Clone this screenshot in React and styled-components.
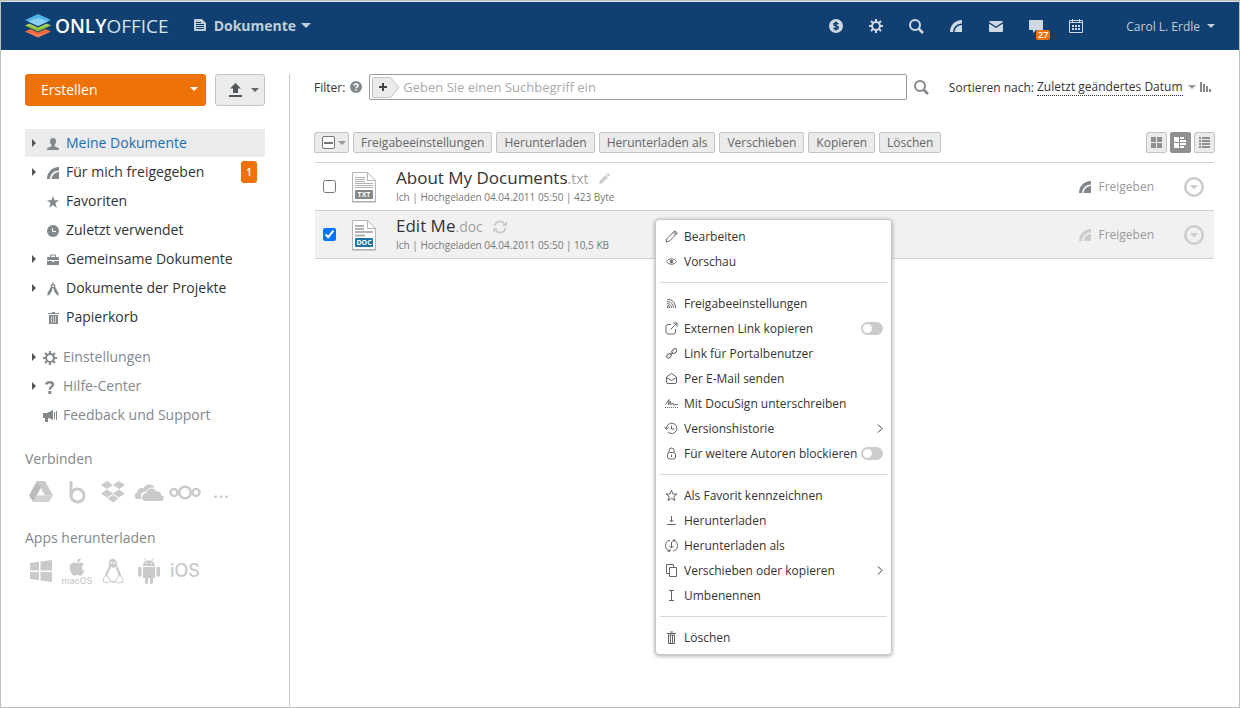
import React, { useState } from 'react';
import styled, { createGlobalStyle, css } from 'styled-components';
import { FaApple } from 'react-icons/fa';

const GlobalStyle = createGlobalStyle`
  * {
    box-sizing: border-box;
  }
  body {
    margin: 0;
    background: #fff;
    color: #333;
    font-family: 'Open Sans', 'Liberation Sans', sans-serif;
    font-size: 12px;
  }
  button, input, select {
    font-family: inherit;
    font-size: inherit;
    color: inherit;
  }
  svg {
    display: block;
    flex: none;
  }
`;

/* ---------- icons ---------- */

const Icon = ({ w = 14, h = 14, children, ...rest }) => (
  <svg width={w} height={h} viewBox={`0 0 ${w} ${h}`} fill="currentColor" aria-hidden="true" {...rest}>
    {children}
  </svg>
);

const Line = ({ children, ...rest }) => (
  <Icon w={13} h={13} fill="none" stroke="currentColor" strokeWidth="1" {...rest}>
    {children}
  </Icon>
);

const LogoIcon = () => (
  <Icon w={26} h={24}>
    <path d="M0 17.5L13 11.5L26 17.5L13 23.5Z" fill="#f0693e" />
    <path d="M0 17.5L13 23L26 17.5L13 20.5Z" fill="#f7987a" opacity="0.5" />
    <path d="M0 12.5L13 6.5L26 12.5L13 18.5Z" fill="#0f4071" />
    <path d="M0 11.5L13 5.5L26 11.5L13 17.5Z" fill="#8ec03c" />
    <path d="M0 11.5L13 6L26 11.5L13 14.5Z" fill="#b5d66c" opacity="0.6" />
    <path d="M0 7.5L13 2L26 7.5L13 13.5Z" fill="#0f4071" />
    <path d="M0 6L13 0L26 6L13 12Z" fill="#4fb3e8" />
    <path d="M3 7.4L13 4L23 7.4L13 12Z" fill="#a5dcf6" opacity="0.7" />
  </Icon>
);

const DocIcon = () => (
  <Icon w={12} h={12}>
    <path d="M1 0H8L12 4V11A1 1 0 0 1 11 12H1A1 1 0 0 1 0 11V1A1 1 0 0 1 1 0Z" />
    <path d="M2 3.5H7M2 5.5H10M2 7.5H10M2 9.5H10" stroke="#0f4071" />
  </Icon>
);

const DollarIcon = () => (
  <Icon>
    <circle cx="7" cy="7" r="7" />
    <path
      d="M9.3 5.1C8.9 4.3 8 4 7 4C5.7 4 4.8 4.6 4.8 5.5C4.8 7.5 9.3 6.4 9.3 8.5C9.3 9.5 8.3 10.1 7 10.1C5.9 10.1 5 9.7 4.6 8.9M7 2.5V11.5"
      fill="none"
      stroke="#0f4071"
      strokeWidth="1.5"
    />
  </Icon>
);

const GearIcon = () => (
  <Icon>
    <circle cx="7" cy="7" r="3.9" fill="none" stroke="currentColor" strokeWidth="2" />
    <path
      d="M7 0V3M7 11V14M0 7H3M11 7H14M2 2L4.2 4.2M9.8 9.8L12 12M2 12L4.2 9.8M9.8 4.2L12 2"
      stroke="currentColor"
      strokeWidth="2"
    />
  </Icon>
);

const SearchIcon = () => (
  <Icon w={15} h={15} fill="none" stroke="currentColor" strokeWidth="2">
    <circle cx="6" cy="6" r="5" />
    <path d="M9.5 9.5L14 14" strokeWidth="2.5" />
  </Icon>
);

const FeedIcon = () => (
  <Icon w={12} h={12}>
    <path d="M0 12C0 5 5 0 12 0V3.5C7 3.5 3.5 7 3 12Z" />
    <path d="M4.5 12C5 8 8 5 12 5V12Z" />
  </Icon>
);

const MailIcon = () => (
  <Icon w={14} h={11}>
    <path d="M0 1A1 1 0 0 1 1 0H13A1 1 0 0 1 14 1L7 5.5Z" />
    <path d="M0 2.5L7 7L14 2.5V10A1 1 0 0 1 13 11H1A1 1 0 0 1 0 10Z" />
  </Icon>
);

const ChatIcon = () => (
  <Icon w={14} h={13}>
    <path d="M1 0H13A1 1 0 0 1 14 1V10H7L4 13V10H1A1 1 0 0 1 0 9V1A1 1 0 0 1 1 0Z" />
  </Icon>
);

const CalendarIcon = () => (
  <Icon>
    <path d="M0.5 1.5H13.5V13.5H0.5Z" fill="none" stroke="currentColor" />
    <path d="M3 0H4V3H3ZM10 0H11V3H10ZM1 3H13V4H1Z" />
    <path d="M3 6h2v2h-2zM6 6h2v2h-2zM9 6h2v2h-2zM3 9h2v2h-2zM6 9h2v2h-2zM9 9h2v2h-2z" />
  </Icon>
);

const UploadIcon = () => (
  <Icon w={13} h={14}>
    <path d="M6.5 0L12 5.5H9V10H4V5.5H1ZM0 12H13V14H0Z" />
  </Icon>
);

const UserIcon = () => (
  <Icon w={12} h={12}>
    <path d="M6 0C8 0 9 1.400 9 3.200C9 5 8.200 6.300 7.500 7V8.300L11 9.700C11.700 10 12 10.500 12 12H0C0 10.500 0.300 10 1 9.700L4.500 8.300V7C3.800 6.300 3 5 3 3.200C3 1.400 4 0 6 0Z" />
  </Icon>
);

const StarIcon = () => (
  <Icon w={12} h={12}>
    <path d="M6 0L7.500 4.300H12L8.400 7L9.800 12L6 8.900L2.200 12L3.600 7L0 4.300H4.500Z" />
  </Icon>
);

const ClockIcon = () => (
  <Icon w={12} h={12}>
    <circle cx="6" cy="6" r="6" />
    <path d="M5.500 3V6.500H9" fill="none" stroke="#fff" />
  </Icon>
);

const CaseIcon = () => (
  <Icon w={12} h={12}>
    <path d="M3.500 3V1H8.500V3" fill="none" stroke="currentColor" />
    <path d="M1 3H11A1 1 0 0 1 12 4V6H0V4A1 1 0 0 1 1 3ZM0 7H5V8H7V7H12V11H0Z" />
  </Icon>
);

const CompassIcon = () => (
  <Icon w={12} h={14}>
    <path d="M5.500 0H6.500V2A2.200 2.200 0 0 1 8.200 5L11.500 11V14L8.800 12L6.700 7.500V6.200H5.300V7.500L3.200 12L0.500 14V11L3.800 5A2.200 2.200 0 0 1 5.500 2Z" />
    <circle cx="6" cy="4.200" r="0.900" fill="#fff" />
    <path d="M2 10L5 9M7 9L10 10" stroke="currentColor" />
  </Icon>
);

const TrashIcon = () => (
  <Icon w={11} h={12}>
    <path d="M4 0H7V1H11V2H0V1H4ZM1 3H10V12H1Z" />
    <path d="M3.500 4V11M5.500 4V11M7.500 4V11" stroke="#fff" strokeOpacity="0.6" />
  </Icon>
);

const HelpIcon = () => (
  <Icon w={10} h={13}>
    <path
      d="M1 3.500C1.500 1.800 3 1.200 4.800 1.200C7 1.200 8 2.200 8 3.600C8 5.800 4.800 5.800 4.800 8.800"
      fill="none"
      stroke="currentColor"
      strokeWidth="2.400"
    />
    <path d="M3.300 10H6.300V13H3.300Z" />
  </Icon>
);

const HornIcon = () => (
  <Icon w={14} h={12}>
    <path d="M0 3H4L10 0V10L6 8H5V12H2V8H0Z" />
    <path d="M11.500 2V9M13.500 1V10" stroke="currentColor" />
  </Icon>
);

const QuestionIcon = () => (
  <Icon w={12} h={12}>
    <circle cx="6" cy="6" r="6" />
    <path d="M4 4.600C4.100 3.500 5 3 6 3C7.200 3 8 3.600 8 4.600C8 5.800 6.200 5.800 6.200 7.300M6.200 8.300V9.800" fill="none" stroke="#fff" strokeWidth="1.500" />
  </Icon>
);

const SortIcon = () => (
  <Icon w={12} h={10}>
    <path d="M0 0H2V10H0ZM3 2H5V10H3ZM6 4H8V10H6ZM9 7H11V10H9Z" />
  </Icon>
);

const TilesIcon = () => (
  <Icon w={11} h={11}>
    <path d="M0 0H5V5H0ZM6 0H11V5H6ZM0 6H5V11H0ZM6 6H11V11H6Z" />
  </Icon>
);

const DetailsIcon = () => (
  <Icon w={13} h={11}>
    <path d="M0 0H5V5H0ZM0 6H5V11H0ZM6 0H10V2H6ZM6 3H12V5H6ZM6 6H12V8H6ZM6 9H10V11H6Z" />
  </Icon>
);

const ListIcon = () => (
  <Icon w={11} h={11}>
    <path d="M0 0H2V2H0ZM3 0H11V2H3ZM0 3H2V5H0ZM3 3H11V5H3ZM0 6H2V8H0ZM3 6H11V8H3ZM0 9H2V11H0ZM3 9H11V11H3Z" />
  </Icon>
);

const FileIcon = ({ label, color, full }) => (
  <Icon w={25} h={31}>
    <path d="M0.500 0.500H15.500L23.500 8.500V29.500H0.500Z" fill="#fff" stroke="#b5b5b5" />
    <path d="M15.500 0.500V8.500H23.500" fill="none" stroke="#b5b5b5" />
    <path d="M0 30H24" stroke="#aaa" />
    <path
      d={full ? 'M3 5.500H13M3 7.500H13M3 9.500H13M3 11.500H21M3 13.500H21M3 15.500H21' : 'M3 6H12M3 9H12M3 12H21M3 15.500H13'}
      stroke="#b0b0b0"
      strokeWidth={full ? 1 : 2}
    />
    <rect x="3" y="18" width="18" height="9" rx="1" fill={color} />
    <text x="12" y="25" fontSize="7" fontWeight="700" fill="#fff" textAnchor="middle">
      {label}
    </text>
  </Icon>
);

const PenIcon = () => (
  <Icon w={11} h={11}>
    <path d="M0 11L0.800 7.800L6.500 2L9 4.500L3.200 10.200ZM7.200 1.300L8.200 0.400Q8.800 0 9.400 0.400L10.600 1.600Q11 2.200 10.600 2.800L9.700 3.800Z" />
  </Icon>
);

const RefreshIcon = () => (
  <Icon>
    <path d="M1.500 6C2 3.300 4.300 1.500 7 1.500C9 1.500 10.500 2.400 11.500 4M12.500 8C12 10.700 9.700 12.500 7 12.500C5 12.500 3.500 11.600 2.500 10" fill="none" stroke="currentColor" strokeWidth="1.800" />
    <path d="M14 1V6H9ZM0 13V8H5Z" />
  </Icon>
);

const ActionsIcon = () => (
  <Icon w={20} h={20}>
    <circle cx="10" cy="10" r="8.700" fill="none" stroke="currentColor" strokeWidth="2.500" />
    <path d="M6 8H14L10 12.500Z" />
  </Icon>
);

/* storage services */

const DriveIcon = () => (
  <Icon w={24} h={22}>
    <path d="M8 0H16L12 6.500L4 21L0 14.500Z" fill="#b9bbbc" />
    <path d="M8 0H16L24 14.500H16Z" />
    <path d="M7.500 14.500H24L20 21H4Z" fill="#cfd1d2" />
  </Icon>
);

const BoxIcon = () => (
  <Icon w={17} h={23} fill="none" stroke="currentColor" strokeWidth="3">
    <circle cx="8.500" cy="14.500" r="6.500" />
    <path d="M2 14.500V1.500" strokeLinecap="round" />
  </Icon>
);

const DropboxIcon = () => (
  <Icon w={24} h={22}>
    <path d="M6 0L12 4L6 8L0 4ZM18 0L24 4L18 8L12 4ZM6 8.500L12 12.500L6 16.500L0 12.500ZM18 8.500L24 12.500L18 16.500L12 12.500ZM12 13.700L17.500 17.500L12 21.500L6.500 17.500Z" />
  </Icon>
);

const CloudIcon = () => (
  <Icon w={30} h={17}>
    <path d="M3 15C0 14 -0.500 9.500 3.500 8.500C3 5 7 3 9.500 4.500C11.500 -0.500 19 -1 21 4C17 2.800 13.500 4.500 12.500 7.500C8 7 5.500 11 7.500 15Z" />
    <path d="M11 17C6.500 17 6.500 9.500 12.500 9C13 4 20 2.500 22.500 7.500C26 7 27.500 9 27 11C31 11.500 30.500 17 27 17Z" />
  </Icon>
);

const NextcloudIcon = () => (
  <Icon w={32} h={15} fill="none" stroke="currentColor" strokeWidth="2.500">
    <circle cx="16" cy="7.500" r="5.800" />
    <circle cx="5" cy="7.500" r="3.500" />
    <circle cx="27" cy="7.500" r="3.500" />
  </Icon>
);

/* platforms */

const WindowsIcon = () => (
  <Icon w={22} h={22}>
    <path d="M0 3L9 1.800V10.500H0ZM10.500 1.600L22 0V10.500H10.500ZM0 12H9V20.200L0 19ZM10.500 12H22V22L10.500 20.400Z" />
  </Icon>
);

const TuxIcon = () => (
  <Icon w={22} h={26}>
    <path d="M7 7C6 -1 15 -1 15 6C15 12 20 13 19 21L11 25L3 21C2 14 7 12 7 7Z" />
    <path d="M9 8.500L11 10L13.500 8.500C14 12 16.500 14 16.500 18C16.500 21 14 23 11 23C8 23 5.500 21 5.500 18C5.500 14 8.500 12 9 8.500Z" fill="#fff" />
    <circle cx="9.500" cy="5" r="1" fill="#fff" />
    <circle cx="12.500" cy="5" r="1" fill="#fff" />
    <path d="M4 17L9 23Q7 26 1 24Q0 21 4 17ZM18 17L13 23Q15 26 21 24Q22 21 18 17Z" fill="#fff" stroke="currentColor" />
  </Icon>
);

const AndroidIcon = () => (
  <Icon w={22} h={26}>
    <path d="M5 8C5 0.500 17 0.500 17 8ZM5 9H17V20H15V24.500A1.500 1.500 0 0 1 12 24.500V20H10V24.500A1.500 1.500 0 0 1 7 24.500V20H5ZM0 10.500A1.800 1.800 0 0 1 3.600 10.500V17A1.800 1.800 0 0 1 0 17ZM18.400 10.500A1.800 1.800 0 0 1 22 10.500V17A1.800 1.800 0 0 1 18.400 17Z" />
    <path d="M6.500 0.500L8.500 3.500M15.500 0.500L13.500 3.500" stroke="currentColor" />
    <circle cx="8.500" cy="5.500" r="0.800" fill="#fff" />
    <circle cx="13.500" cy="5.500" r="0.800" fill="#fff" />
  </Icon>
);

/* context menu */

const menuIcons = {
  edit: (
    <Line>
      <path d="M1 12L2 8.500L9 1.500L11.500 4L4.500 11ZM9 1.500L10 0.800L12.200 3L11.500 4M8 2.500L10.500 5" />
    </Line>
  ),
  eye: (
    <Line>
      <path d="M1.500 6.500C4 2.800 9 2.800 11.500 6.500C9 10.200 4 10.200 1.500 6.500Z" />
      <circle cx="6.500" cy="6.500" r="1.300" fill="currentColor" />
    </Line>
  ),
  share: (
    <Line>
      <path d="M2 2.500C7 2 10.500 5.500 10.500 11M2 4.500C6 4.500 8.500 7 8.500 11M2 6.500C5 6.500 6.500 8.500 6.500 11M2 8.500C4 8.500 4.500 9.500 4.500 11" />
      <path d="M2 9.500H3.500V11H2Z" fill="currentColor" stroke="none" />
    </Line>
  ),
  external: (
    <Line>
      <path d="M6 2.500H3Q1 2.500 1 4.500V10Q1 12 3 12H8.500Q10.500 12 10.500 10V7M5.500 7.500L12 1M8 1H12V5" />
    </Line>
  ),
  link: (
    <Line>
      <rect x="6.500" y="2.300" width="5.500" height="3.600" rx="1.800" transform="rotate(-40 9.200 4.100)" />
      <rect x="1.500" y="7" width="5" height="3.600" rx="1.800" transform="rotate(-40 4 8.800)" />
      <path d="M4.500 8.300L8.500 4.700" />
    </Line>
  ),
  mail: (
    <Line>
      <path d="M1.500 5L6.500 1.500L11.500 5V10Q11.500 11.500 10 11.500H3Q1.500 11.500 1.500 10ZM1.500 5.500L6.500 8.500L11.500 5.500" />
    </Line>
  ),
  sign: (
    <Line>
      <path d="M0.500 7.500L4 2.500L3.500 8L5.500 4L6 8L8 6L8.500 8L13 7.500" />
      <path d="M0 10.500H13" strokeDasharray="1 1" />
    </Line>
  ),
  history: (
    <Line>
      <path d="M1.500 6.500A5.200 5.200 0 1 1 3 10M-0.500 5L1.500 7.500L3.800 5M6.500 3.500V7H9.500" />
    </Line>
  ),
  lock: (
    <Line>
      <rect x="2.500" y="5.500" width="8" height="6.500" rx="2" />
      <path d="M4 5.500V3.500Q4 1 6.500 1Q9 1 9 3.500V5.500M6.500 7.500V10" />
    </Line>
  ),
  star: (
    <Line>
      <path d="M6.500 1.200L7.900 5H12L8.800 7.400L10 11.600L6.500 9.200L3 11.600L4.200 7.400L1 5H5.100Z" />
    </Line>
  ),
  download: (
    <Line>
      <path d="M6.500 2V8M4.500 6L6.500 8L8.500 6M2 10.500H11" />
    </Line>
  ),
  downloadAs: (
    <Line>
      <path d="M5 12A5.500 5.500 0 0 1 5 1.200M8 1.200A5.500 5.500 0 0 1 8 12M6.500 3V9M4.500 7L6.500 9L8.500 7M2.500 12.200H5V10M10.500 1H8V3.300" />
    </Line>
  ),
  copy: (
    <Line>
      <path d="M4.500 3.500H11.500V12.500H4.500ZM4 9.500H1.500V0.500H8.500V3" />
    </Line>
  ),
  rename: (
    <Line>
      <path d="M6.500 1.500V11.500M4 1.500H9M4 11.500H9" />
    </Line>
  ),
  trash: (
    <Line>
      <path d="M2 2.500H11M5 1H8M3.500 4V12.500H9.500V4M5.500 4V12M7.500 4V12M3 4H10" />
    </Line>
  ),
};

/* ---------- layout ---------- */

const Page = styled.div`
  display: flex;
  flex-direction: column;
  min-height: 100vh;
  border: 1px solid #bfbfbf;
`;

const Header = styled.header`
  display: flex;
  align-items: center;
  height: 49px;
  padding: 0 24px;
  border-top: 1px solid #dfe3e8;
  background: #0f4071;
  color: #cfd9e3;
`;

const Logo = styled.a`
  display: flex;
  align-items: center;
  gap: 4px;
  color: #fff;
  font-size: 19px;
  font-weight: 600;
  text-decoration: none;

  em {
    color: #d5e1ea;
    font-style: normal;
    font-weight: 500;
  }
`;

const HeaderButton = styled.button`
  display: flex;
  align-items: center;
  padding: 0;
  border: none;
  background: none;
  cursor: pointer;
`;

const ProductButton = styled(HeaderButton)`
  gap: 5px;
  margin-left: 25px;
  padding-bottom: 2px;
  font-size: 14px;
  font-weight: 700;
  color: #c3cdd8;

  svg {
    margin-right: 3px;
  }
`;

const HeaderIcons = styled.nav`
  display: flex;
  margin-left: auto;
`;

const HeaderLink = styled.a`
  position: relative;
  display: flex;
  align-items: center;
  justify-content: center;
  width: 40px;
  height: 32px;
  color: inherit;
`;

const HeaderBadge = styled.span`
  position: absolute;
  right: 6px;
  bottom: 2px;
  height: 10px;
  padding: 0 2px;
  border-radius: 2px;
  background: #ed7309;
  color: #fff;
  font-size: 9px;
  font-weight: 600;
  line-height: 10px;
`;

const UserButton = styled(HeaderButton)`
  gap: 7px;
  margin-left: 30px;
  color: #c3cdd8;
`;

const Caret = styled.span`
  flex: none;
  border: ${(props) => props.$size || 4}px solid transparent;
  border-top-color: currentColor;
  border-bottom: none;
`;

const Body = styled.div`
  display: flex;
  flex: 1;
  padding: 24px 24px 0;
`;

const Sidebar = styled.aside`
  flex: none;
  width: 265px;
  padding-right: 24px;
  border-right: 1px solid #c9c9c9;
`;

const SidebarButtons = styled.div`
  display: flex;
  gap: 9px;
  margin-bottom: 23px;
`;

const CreateButton = styled.button`
  display: flex;
  flex: 1;
  align-items: center;
  justify-content: space-between;
  height: 32px;
  padding: 0 8px 2px 16px;
  border: none;
  border-radius: 3px;
  background: #ed7309;
  color: #fff;
  font-size: 14px;
  cursor: pointer;
`;

const UploadButton = styled.button`
  display: flex;
  align-items: center;
  gap: 9px;
  height: 32px;
  padding: 0 5px 0 13px;
  border: 1px solid #c4c4c4;
  border-radius: 3px;
  background: #ebebeb;
  color: #666;
  cursor: pointer;

  svg {
    color: #50565a;
  }
`;

const NavList = styled.ul`
  display: flex;
  flex-direction: column;
  gap: 1px;
  margin: 0 0 12px;
  padding: 0;
  list-style: none;
`;

const NavLink = styled.a`
  display: flex;
  align-items: center;
  height: 28px;
  padding: 0 8px 0 7px;
  color: ${(props) => (props.$active ? '#1a6db3' : props.$minor ? '#83888d' : '#333')};
  background: ${(props) => (props.$active ? '#ebebeb' : 'none')};
  font-size: 14px;
  text-decoration: none;

  svg {
    color: #83888d;
  }
`;

const NavArrow = styled.span`
  width: 4px;
  margin-right: ${(props) => (props.$minor ? 7 : 10)}px;
  border: 4px solid transparent;
  border-left-color: ${(props) => (props.$open ? '#555' : 'transparent')};
  border-right: none;
`;

const NavIcon = styled.span`
  display: flex;
  justify-content: center;
  width: 14px;
  margin-right: 6px;
  padding-top: 2px;
`;

const NavName = styled.span`
  padding-bottom: 2px;
`;

const NavBadge = styled.span`
  width: 16px;
  margin-left: auto;
  border-radius: 3px;
  background: #ed7309;
  color: #fff;
  font-size: 10px;
  font-weight: 600;
  line-height: 22px;
  text-align: center;
`;

const SidebarTitle = styled.h2`
  margin: 0;
  padding-top: ${(props) => props.$top}px;
  color: #83888d;
  font-size: 14px;
  font-weight: 400;
  line-height: 20px;
`;

const ServiceList = styled.div`
  display: flex;
  align-items: center;
  gap: 4px;
  height: 28px;
  margin-top: 9px;
`;

const ServiceLink = styled.a`
  display: flex;
  flex-direction: column;
  align-items: center;
  justify-content: center;
  width: 32px;
  height: 30px;
  color: #c8cacb;
  font-family: 'Inter', 'Liberation Sans', sans-serif;
  font-size: ${(props) => (props.$big ? 18 : 9)}px;
  font-weight: 500;
  line-height: ${(props) => (props.$big ? 28 : 8)}px;
  text-decoration: none;
`;

const Main = styled.main`
  flex: 1;
  min-width: 0;
  padding-left: 24px;
`;

const FilterBar = styled.div`
  display: flex;
  align-items: center;
  height: 26px;
`;

const FilterLabel = styled.label`
  margin-right: 5px;
`;

const PlainButton = styled.button`
  display: flex;
  align-items: center;
  padding: 0;
  border: none;
  background: none;
  color: #83888d;
  cursor: pointer;
`;

const SearchBox = styled.div`
  display: flex;
  flex: 1;
  align-items: center;
  height: 26px;
  margin: 0 7px;
  padding: 0 2px;
  border: 1px solid #999;
  border-radius: 2px;
`;

const AddFilter = styled(PlainButton)`
  flex: none;
  color: #444;
`;

const SearchInput = styled.input`
  flex: 1;
  min-width: 0;
  padding: 0 3px;
  border: none;
  outline: none;
  background: none;
  font-size: 13px;

  &::placeholder {
    color: #a9a9a9;
    opacity: 1;
  }
`;

const SortBox = styled.div`
  display: flex;
  align-items: center;
  margin-left: 20px;
  color: #999;

  label {
    margin-right: 3px;
    color: #333;
  }
  button {
    margin: 0 3px 0 4px;
  }
`;

const SortSelect = styled.select`
  appearance: none;
  margin-right: 5px;
  padding: 0;
  border: none;
  border-bottom: 1px dotted #333;
  border-radius: 0;
  background: none;
  color: #333;
`;

const Toolbar = styled.div`
  display: flex;
  gap: 4px;
  margin: 32px 0 9px;
`;

const ToolButton = styled.button`
  display: flex;
  align-items: center;
  justify-content: center;
  height: 21px;
  padding: 0 7px;
  border: 1px solid #c4c4c4;
  border-radius: 2px;
  background: #ebebeb;
  color: #666;
  cursor: pointer;
`;

const SelectAll = styled.div`
  display: flex;
  align-items: center;
  gap: 3px;
  height: 21px;
  padding: 0 2px 0 7px;
  border: 1px solid #c4c4c4;
  border-radius: 2px;
  background: #ebebeb;
  color: #999;
`;

const ViewSwitch = styled.div`
  display: flex;
  gap: 3px;
  margin-left: auto;
`;

const ViewButton = styled(ToolButton)`
  width: 21px;
  padding: 0;
  color: #8f8f8f;
  ${(props) =>
    props.$active &&
    css`
      border-color: #8f8f8f;
      background: #8f8f8f;
      color: #fff;
    `}
`;

const Checkbox = styled.input`
  width: 13px;
  height: 13px;
  margin: 0;

  &:indeterminate {
    display: flex;
    appearance: none;
    align-items: center;
    justify-content: center;
    border: 1px solid #767676;
    border-radius: 2px;
    background: #fff;
  }
  &:indeterminate::before {
    width: 9px;
    height: 2px;
    background: #767676;
    content: '';
  }
`;

const FileList = styled.ul`
  margin: 0 1px;
  padding: 0;
  border-top: 1px solid #d1d1d1;
  list-style: none;
`;

const FileRow = styled.li`
  position: relative;
  display: flex;
  align-items: center;
  height: 48px;
  padding: 0 10px 0 8px;
  border-bottom: 1px solid #d1d1d1;
  background: ${(props) => (props.$selected ? '#f1f1f1' : '#fff')};

  & > svg {
    margin: 2px 19px 0 16px;
  }
`;

const FileInfo = styled.div`
  flex: 1;
`;

const FileTitle = styled.div`
  display: flex;
  align-items: center;
  gap: 10px;
  font-size: 17px;
  line-height: 20px;
  color: #ccc;

  a {
    color: #333;
    text-decoration: none;
  }
  small {
    color: #a3a3a3;
    font-size: 14px;
  }
`;

const FileMeta = styled.div`
  color: #777;
  font-size: 10px;
  line-height: 16px;
`;

const ShareButton = styled(PlainButton)`
  gap: 7px;
  margin-right: 30px;
  color: #999;

  svg {
    color: ${(props) => (props.$dim ? '#ccc' : '#83888d')};
  }
`;

const RowButton = styled(PlainButton)`
  color: #ccc;
`;

const Menu = styled.div`
  position: absolute;
  z-index: 10;
  top: 8px;
  left: 340px;
  width: 237px;
  padding: 4px;
  border: 1px solid #c7c7c7;
  border-radius: 4px;
  background: #fff;
  box-shadow: 0 1px 4px rgba(0, 0, 0, 0.35);
`;

const menuItem = css`
  display: flex;
  align-items: center;
  width: 100%;
  height: 25px;
  padding: 0 4px 0 5px;
  border: none;
  background: none;
  color: #333;
  white-space: nowrap;
  cursor: pointer;

  svg {
    margin-right: 6px;
    overflow: visible;
    color: #666;
  }
  svg:last-child {
    margin: 0 0 0 auto;
    color: #333;
  }
`;

const MenuButton = styled.button`
  ${menuItem}
`;

const MenuLabel = styled.label`
  ${menuItem}
`;

const MenuDivider = styled.hr`
  height: 1px;
  margin: 8px 0;
  border: none;
  background: #d8d8d8;
`;

const Toggle = styled.input`
  appearance: none;
  flex: none;
  width: 22px;
  height: 13px;
  margin: 0 0 0 auto;
  padding: 2px;
  border-radius: 7px;
  background: ${(props) => (props.checked ? '#3db4e6' : '#ccc')};

  &::before {
    display: block;
    width: 9px;
    height: 9px;
    margin-left: ${(props) => (props.checked ? 9 : 0)}px;
    border-radius: 50%;
    background: #fff;
    content: '';
  }
`;

/* ---------- data ---------- */

const headerLinks = [
  { title: 'Zahlungen', icon: <DollarIcon /> },
  { title: 'Einstellungen', icon: <GearIcon /> },
  { title: 'Suche', icon: <SearchIcon /> },
  { title: 'Feed', icon: <FeedIcon /> },
  { title: 'E-Mail', icon: <MailIcon /> },
  { title: 'Chat', icon: <ChatIcon />, count: 27 },
  { title: 'Kalender', icon: <CalendarIcon /> },
];

const folders = [
  { name: 'Meine Dokumente', icon: <UserIcon />, open: true, active: true },
  { name: 'Für mich freigegeben', icon: <FeedIcon />, open: true, count: 1 },
  { name: 'Favoriten', icon: <StarIcon /> },
  { name: 'Zuletzt verwendet', icon: <ClockIcon /> },
  { name: 'Gemeinsame Dokumente', icon: <CaseIcon />, open: true },
  { name: 'Dokumente der Projekte', icon: <CompassIcon />, open: true },
  { name: 'Papierkorb', icon: <TrashIcon /> },
];

const helpers = [
  { name: 'Einstellungen', icon: <GearIcon />, open: true },
  { name: 'Hilfe-Center', icon: <HelpIcon />, open: true },
  { name: 'Feedback und Support', icon: <HornIcon /> },
];

const actions = ['Freigabeeinstellungen', 'Herunterladen', 'Herunterladen als', 'Verschieben', 'Kopieren', 'Löschen'];

const menuGroups = [
  [
    { name: 'Bearbeiten', icon: 'edit' },
    { name: 'Vorschau', icon: 'eye' },
  ],
  [
    { name: 'Freigabeeinstellungen', icon: 'share' },
    { name: 'Externen Link kopieren', icon: 'external', toggle: true },
    { name: 'Link für Portalbenutzer', icon: 'link' },
    { name: 'Per E-Mail senden', icon: 'mail' },
    { name: 'Mit DocuSign unterschreiben', icon: 'sign' },
    { name: 'Versionshistorie', icon: 'history', more: true },
    { name: 'Für weitere Autoren blockieren', icon: 'lock', toggle: true },
  ],
  [
    { name: 'Als Favorit kennzeichnen', icon: 'star' },
    { name: 'Herunterladen', icon: 'download' },
    { name: 'Herunterladen als', icon: 'downloadAs' },
    { name: 'Verschieben oder kopieren', icon: 'copy', more: true },
    { name: 'Umbenennen', icon: 'rename' },
  ],
  [{ name: 'Löschen', icon: 'trash' }],
];

/* ---------- components ---------- */

const Nav = ({ items, minor }) => (
  <NavList>
    {items.map((item) => (
      <li key={item.name}>
        <NavLink href="#" $active={item.active} $minor={minor}>
          <NavArrow $open={item.open} $minor={minor} />
          <NavIcon>{item.icon}</NavIcon>
          <NavName>{item.name}</NavName>
          {item.count && <NavBadge>{item.count}</NavBadge>}
        </NavLink>
      </li>
    ))}
  </NavList>
);

const MenuToggle = ({ item }) => {
  const [on, setOn] = useState(false);

  return (
    <MenuLabel>
      {menuIcons[item.icon]}
      {item.name}
      <Toggle type="checkbox" checked={on} onChange={() => setOn(!on)} />
    </MenuLabel>
  );
};

const ContextMenu = () => (
  <Menu>
    {menuGroups.map((group, i) => (
      <React.Fragment key={i}>
        {i > 0 && <MenuDivider />}
        {group.map((item) =>
          item.toggle ? (
            <MenuToggle key={item.name} item={item} />
          ) : (
            <MenuButton key={item.name} type="button">
              {menuIcons[item.icon]}
              <span>{item.name}</span>
              {item.more && (
                <Icon w={6} h={9} fill="none" stroke="currentColor">
                  <path d="M1 0.500L5 4.500L1 8.500" />
                </Icon>
              )}
            </MenuButton>
          )
        )}
      </React.Fragment>
    ))}
  </Menu>
);

const File = ({ name, ext, meta, icon, status, selected, onSelect, children }) => (
  <FileRow $selected={selected}>
    <Checkbox type="checkbox" aria-label={name} checked={selected} onChange={onSelect} />
    {icon}
    <FileInfo>
      <FileTitle>
        <a href="#">
          {name}
          <small>{ext}</small>
        </a>
        {status}
      </FileTitle>
      <FileMeta>{meta}</FileMeta>
    </FileInfo>
    <ShareButton type="button" $dim={selected}>
      <FeedIcon />
      Freigeben
    </ShareButton>
    <RowButton type="button" aria-label="Aktionen">
      <ActionsIcon />
    </RowButton>
    {children}
  </FileRow>
);

const App = () => {
  const [selected, setSelected] = useState([false, true]);
  const toggle = (i) => setSelected(selected.map((value, n) => (n === i ? !value : value)));
  const all = selected.every(Boolean);
  const some = selected.some(Boolean) && !all;

  return (
    <Page>
      <GlobalStyle />
      <Header>
        <Logo href="#">
          <LogoIcon />
          <span>
            ONLY<em>OFFICE</em>
          </span>
        </Logo>
        <ProductButton type="button">
          <DocIcon />
          <span>Dokumente</span>
          <Caret $size={5} />
        </ProductButton>
        <HeaderIcons>
          {headerLinks.map((link) => (
            <HeaderLink key={link.title} href="#" aria-label={link.title}>
              {link.icon}
              {link.count && <HeaderBadge>{link.count}</HeaderBadge>}
            </HeaderLink>
          ))}
        </HeaderIcons>
        <UserButton type="button">
          Carol L. Erdle
          <Caret />
        </UserButton>
      </Header>
      <Body>
        <Sidebar>
          <SidebarButtons>
            <CreateButton type="button">
              Erstellen
              <Caret />
            </CreateButton>
            <UploadButton type="button" aria-label="Hochladen">
              <UploadIcon />
              <Caret />
            </UploadButton>
          </SidebarButtons>
          <Nav items={folders} />
          <Nav items={helpers} minor />
          <SidebarTitle $top={8}>Verbinden</SidebarTitle>
          <ServiceList>
            <ServiceLink href="#" aria-label="Google Drive">
              <DriveIcon />
            </ServiceLink>
            <ServiceLink href="#" aria-label="Box">
              <BoxIcon />
            </ServiceLink>
            <ServiceLink href="#" aria-label="Dropbox">
              <DropboxIcon />
            </ServiceLink>
            <ServiceLink href="#" aria-label="OneDrive">
              <CloudIcon />
            </ServiceLink>
            <ServiceLink href="#" aria-label="Nextcloud">
              <NextcloudIcon />
            </ServiceLink>
            <ServiceLink href="#" $big>
              ...
            </ServiceLink>
          </ServiceList>
          <SidebarTitle $top={22}>Apps herunterladen</SidebarTitle>
          <ServiceList>
            <ServiceLink href="#" aria-label="Windows">
              <WindowsIcon />
            </ServiceLink>
            <ServiceLink href="#">
              <FaApple size={20} />
              macOS
            </ServiceLink>
            <ServiceLink href="#" aria-label="Linux">
              <TuxIcon />
            </ServiceLink>
            <ServiceLink href="#" aria-label="Android">
              <AndroidIcon />
            </ServiceLink>
            <ServiceLink href="#" $big>
              iOS
            </ServiceLink>
          </ServiceList>
        </Sidebar>
        <Main>
          <FilterBar>
            <FilterLabel htmlFor="filter">Filter:</FilterLabel>
            <PlainButton type="button" aria-label="Hilfe">
              <QuestionIcon />
            </PlainButton>
            <SearchBox>
              <AddFilter type="button" aria-label="Filter hinzufügen">
                <Icon w={28} h={21}>
                  <path d="M1.500 0.500H18.500L27 10.500L18.500 20.500H1.500Q0.500 20.500 0.500 19.500V1.500Q0.500 0.500 1.500 0.500Z" fill="#ebebeb" stroke="#c4c4c4" />
                  <path d="M7 10H15M11 6V14" stroke="currentColor" strokeWidth="2" />
                </Icon>
              </AddFilter>
              <SearchInput id="filter" type="text" placeholder="Geben Sie einen Suchbegriff ein" />
            </SearchBox>
            <PlainButton type="button" aria-label="Suchen">
              <SearchIcon />
            </PlainButton>
            <SortBox>
              <label htmlFor="sort">Sortieren nach:</label>
              <SortSelect id="sort">
                <option>Zuletzt geändertes Datum</option>
              </SortSelect>
              <Caret />
              <PlainButton type="button" aria-label="Reihenfolge">
                <SortIcon />
              </PlainButton>
            </SortBox>
          </FilterBar>
          <Toolbar>
            <SelectAll>
              <Checkbox
                type="checkbox"
                aria-label="Alle auswählen"
                checked={all}
                ref={(el) => {
                  if (el) el.indeterminate = some;
                }}
                onChange={() => setSelected(selected.map(() => !all))}
              />
              <Caret />
            </SelectAll>
            {actions.map((action) => (
              <ToolButton key={action} type="button">
                {action}
              </ToolButton>
            ))}
            <ViewSwitch>
              <ViewButton type="button" aria-label="Kacheln">
                <TilesIcon />
              </ViewButton>
              <ViewButton type="button" aria-label="Details" $active>
                <DetailsIcon />
              </ViewButton>
              <ViewButton type="button" aria-label="Liste">
                <ListIcon />
              </ViewButton>
            </ViewSwitch>
          </Toolbar>
          <FileList>
            <File
              name="About My Documents"
              ext=".txt"
              meta="Ich | Hochgeladen 04.04.2011 05:50 | 423 Byte"
              icon={<FileIcon label="TXT" color="#83888d" full />}
              status={<PenIcon />}
              selected={selected[0]}
              onSelect={() => toggle(0)}
            />
            <File
              name="Edit Me"
              ext=".doc"
              meta="Ich | Hochgeladen 04.04.2011 05:50 | 10,5 KB"
              icon={<FileIcon label="DOC" color="#1c74a6" />}
              status={<RefreshIcon />}
              selected={selected[1]}
              onSelect={() => toggle(1)}
            >
              <ContextMenu />
            </File>
          </FileList>
        </Main>
      </Body>
    </Page>
  );
};

export default App;
